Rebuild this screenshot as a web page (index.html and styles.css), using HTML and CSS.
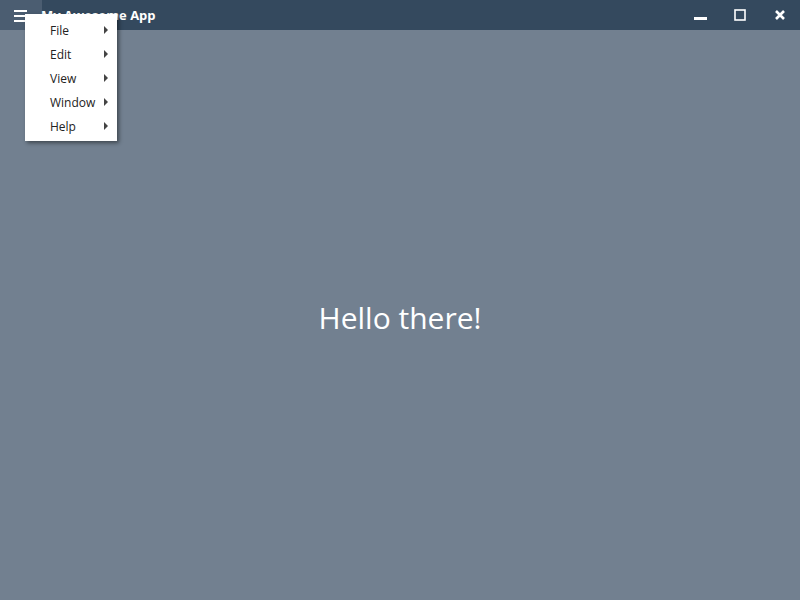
FILE: index.html
```
<!DOCTYPE html>
<html>
<head>
<meta charset="utf-8">
<link rel="stylesheet" href="styles.css">
</head>
<body>
<div class="app">
  <header class="titlebar">
    <button class="menu-btn" aria-label="Menu">
      <svg width="14" height="14" viewBox="0 0 14 14"><rect x="0" y="1" width="13" height="2" fill="#fff"/><rect x="0" y="6" width="13" height="2" fill="#fff"/><rect x="0" y="11" width="13" height="2" fill="#fff"/></svg>
    </button>
    <div class="title">My Awesome App</div>
    <div class="controls">
      <button class="ctl"><svg width="14" height="14" viewBox="0 0 14 14"><rect x="1" y="9" width="14" height="3" fill="#fff"/></svg></button>
      <button class="ctl"><svg width="14" height="14" viewBox="0 0 14 14"><rect x="2" y="2" width="10" height="10" fill="none" stroke="#fff" stroke-width="1.6"/></svg></button>
      <button class="ctl"><svg width="14" height="14" viewBox="0 0 14 14"><path d="M3 3 L11 11 M11 3 L3 11" stroke="#fff" stroke-width="2.6"/></svg></button>
    </div>
  </header>
  <main class="content">
    <h1 class="hello">Hello there!</h1>
  </main>
  <nav class="dropdown">
    <div class="item"><span>File</span><span class="arrow"></span></div>
    <div class="item"><span>Edit</span><span class="arrow"></span></div>
    <div class="item"><span>View</span><span class="arrow"></span></div>
    <div class="item"><span>Window</span><span class="arrow"></span></div>
    <div class="item"><span>Help</span><span class="arrow"></span></div>
  </nav>
</div>
</body>
</html>
```
FILE: styles.css
```
html, body { margin: 0; padding: 0; height: 100%; }
body { font-family: "Open Sans", "Noto Sans", sans-serif; background: #728090; }
.app { position: relative; height: 600px; display: flex; flex-direction: column; }
.titlebar { height: 30px; background: #34495e; display: flex; align-items: center; color: #fff; }
.menu-btn { width: 42px; height: 30px; border: 0; padding: 0 0 0 14px; background: #4b5d71; display: flex; align-items: flex-start; padding-top: 9px; box-sizing: border-box; }
.title { font-weight: bold; font-size: 13px; margin-left: -1px; }
.controls { margin-left: auto; display: flex; }
.ctl { width: 40px; height: 30px; border: 0; background: transparent; padding: 0; display: flex; align-items: center; justify-content: center; }
.content { flex: 1; display: flex; align-items: center; justify-content: center; padding-top: 4px; }
.hello { font-weight: normal; font-size: 30px; color: #fff; margin: 0; }
.dropdown { position: absolute; left: 25px; top: 14px; width: 92px; background: #fff; box-shadow: 2px 2px 4px rgba(0,0,0,0.45); padding: 4px 0 3px; box-sizing: border-box; height: 127px; font-size: 12px; color: #222; }
.item { height: 24px; display: flex; align-items: center; padding-left: 25px; padding-right: 9px; }
.item span:first-child { flex: 1; }
.arrow { width: 0; height: 0; border-left: 4px solid #444; border-top: 4px solid transparent; border-bottom: 4px solid transparent; }
```
